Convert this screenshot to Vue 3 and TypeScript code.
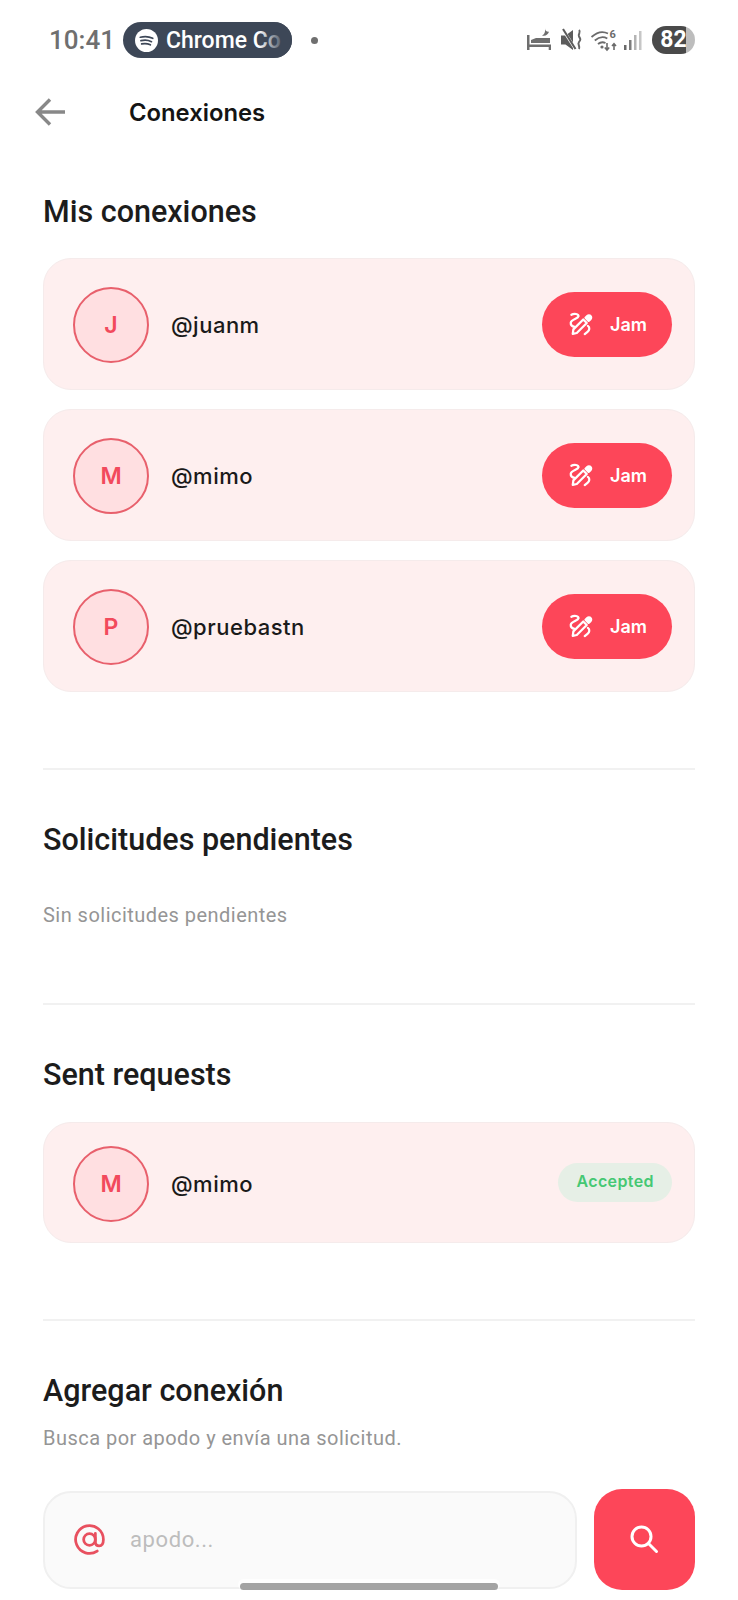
<script setup lang="ts">
interface Connection {
  initial: string
  handle: string
}

const connections: Connection[] = [
  { initial: 'J', handle: '@juanm' },
  { initial: 'M', handle: '@mimo' },
  { initial: 'P', handle: '@pruebastn' },
]
</script>

<template>
  <div class="screen">
    <div class="status-bar">
      <span class="time">10:41</span>
      <div class="media-pill">
        <svg class="spotify" viewBox="0 0 24 24" width="23" height="23">
          <circle cx="12" cy="12" r="12" fill="#fff" />
          <path d="M5.500 8.600c4.400-1.200 9-.9 13 1.100M6.200 12.200c3.700-1 7.600-.7 11 1M7 15.600c3-.7 6.200-.5 9 .9" fill="none" stroke="#3d4757" stroke-width="1.800" stroke-linecap="round" />
        </svg>
        <span class="pill-text">Chrome Co</span>
        <span class="pill-fade"></span>
      </div>
      <span class="dot"></span>
      <div class="status-icons">
        <svg class="bed" width="24" height="26" viewBox="0 0 24 26" fill="#6e6e6e">
          <path d="M0 8h2.500v15H0z" />
          <path d="M4 16v-3l5-2h14v5z" />
          <path d="M2 17.500h22V23h-2.300v-3H2z" />
          <path d="M18 1c.2 2.500 1.200 4 4 3.800-.8 3-4 4.800-7 3.600 2.400-.6 3.600-3.800 3-7.400z" />
        </svg>
        <svg width="26" height="26" viewBox="0 0 26 26" fill="#5c5c5c">
          <path d="M0 8.500h4.500L12 3v20l-7.500-5.500H0z" />
          <path d="M1 1l14 22" stroke="#fff" stroke-width="3" />
          <path d="M2 2l12.500 20" stroke="#5c5c5c" stroke-width="2" />
          <path d="M18 3c2.500 2.500-1.500 4 0 6.500s2 3 0 5.500 1.500 4 0 7" fill="none" stroke="#666" stroke-width="2" />
        </svg>
        <svg width="30" height="30" viewBox="0 0 30 30" fill="none" stroke="#6b6b6b">
          <path d="M1.500 12c5.500-5 11.500-6 16.500-3.500M4.800 15.500c4-3.500 8.500-4.200 12.500-2M8 19c2.500-2 5-2.200 7.500-1" stroke-width="1.800" />
          <circle cx="12" cy="22" r="1.600" fill="#6b6b6b" stroke="none" />
          <path d="M17 18v7M14.800 22.500l2.200 2.500 2.200-2.500M24 25v-6M22 21l2-2.200 2 2.200" stroke-width="1.600" />
          <text x="19.500" y="13" font-size="11" font-family="Roboto, sans-serif" font-weight="700" fill="#6b6b6b" stroke="none">6</text>
        </svg>
        <svg width="20" height="24" viewBox="0 0 20 24">
          <rect x="1" y="17" width="2.500" height="5" fill="#6a6a6a" />
          <rect x="6" y="12" width="2.500" height="10" fill="#7c7c7c" />
          <rect x="11" y="7" width="2.500" height="15" fill="#b4b4b4" />
          <rect x="16" y="3" width="2.500" height="19" fill="#c6c6c6" />
        </svg>
        <div class="battery"><span class="battery-level">82</span></div>
      </div>
    </div>

    <header class="app-bar">
      <svg class="back" width="32" height="30" viewBox="0 0 32 30" fill="none" stroke="#888" stroke-width="3.400">
        <path d="M30 15H3M15 2.500L2.500 15 15 27.500" />
      </svg>
      <h1 class="app-title">Conexiones</h1>
    </header>

    <main class="content">
      <section class="section first">
        <h2 class="section-title">Mis conexiones</h2>
        <div class="card-list">
          <div v-for="c in connections" :key="c.handle" class="card">
            <div class="avatar">{{ c.initial }}</div>
            <span class="handle">{{ c.handle }}</span>
            <button class="jam-btn">
              <svg width="30" height="30" viewBox="0 0 24 24" fill="none" stroke="#fff" stroke-width="1.800" stroke-linecap="round" stroke-linejoin="round">
                <path d="M15.600 7l1.400-1.400c.8-.8 2-.8 2.600 0 .7.7.7 1.800 0 2.500l-1.500 1.400z" fill="#fff" />
                <path d="M13.800 8.400l2.800 2.800-8 8-3.200.7.500-3.600z" />
                <path d="M4.300 4.600C6.500 3.400 10.200 3.800 10 5.800 9.700 7.700 4 8.500 3.800 11c-.1 1.600 1.300 3 3.100 3.300" />
                <path d="M17.500 13.500c1.800 1.200 1.300 3.500-.3 4.800l-2.200 1.800" />
              </svg>
              <span>Jam</span>
            </button>
          </div>
        </div>
      </section>

      <hr class="rule" />

      <section class="section pending">
        <h2 class="section-title">Solicitudes pendientes</h2>
        <p class="muted empty">Sin solicitudes pendientes</p>
      </section>

      <hr class="rule" />

      <section class="section sent">
        <h2 class="section-title">Sent requests</h2>
        <div class="card short">
          <div class="avatar">M</div>
          <span class="handle">@mimo</span>
          <span class="badge">Accepted</span>
        </div>
      </section>

      <hr class="rule" />

      <section class="section add">
        <h2 class="section-title">Agregar conexión</h2>
        <p class="muted hint">Busca por apodo y envía una solicitud.</p>
        <div class="search-row">
          <div class="search-input">
            <svg width="37" height="37" viewBox="0 0 24 24" fill="none" stroke="#e8505f" stroke-width="1.800">
              <circle cx="12" cy="12" r="3.800" />
              <path d="M15.800 8v5.500c0 1.600 1 2.700 2.500 2.700S21 15 21 12a9 9 0 1 0-4 7.500" stroke-linecap="round" />
            </svg>
            <span class="placeholder">apodo...</span>
          </div>
          <button class="search-btn">
            <svg width="36" height="36" viewBox="0 0 36 36" fill="none" stroke="#fff" stroke-width="3" stroke-linecap="round">
              <circle cx="14.500" cy="14.500" r="9.500" />
              <path d="M21.500 21.500l8 8" />
            </svg>
          </button>
        </div>
      </section>
    </main>

    <div class="home-bar"></div>
  </div>
</template>

<style scoped>
.screen {
  position: relative;
  width: 738px;
  height: 1600px;
  overflow: hidden;
  background: #fff;
  font-family: Inter, "Noto Sans", sans-serif;
  color: #1a1a1a;
}

.status-bar {
  display: flex;
  align-items: center;
  height: 36px;
  padding: 22px 43px 0 49px;
  box-sizing: content-box;
}

.time {
  font-family: Roboto, sans-serif;
  font-size: 26px;
  font-weight: 500;
  color: #6f6f6f;
}

.media-pill {
  position: relative;
  display: flex;
  align-items: center;
  gap: 8px;
  width: 169px;
  height: 36px;
  margin-left: 8px;
  padding-left: 12px;
  box-sizing: border-box;
  border-radius: 18px;
  background: #3d4757;
  overflow: hidden;
}

.pill-text {
  font-family: Roboto, sans-serif;
  font-size: 23px;
  font-weight: 500;
  color: #fff;
  white-space: nowrap;
}

.pill-fade {
  position: absolute;
  top: 0;
  right: 0;
  width: 34px;
  height: 100%;
  background: linear-gradient(to right, rgba(61, 71, 87, 0), #3d4757 80%);
}

.dot {
  width: 7px;
  height: 7px;
  margin-left: 19px;
  border-radius: 50%;
  background: #6f6f6f;
}

.status-icons {
  display: flex;
  align-items: center;
  gap: 3px;
  margin-left: auto;
}

.bed {
  margin-right: 7px;
}

.battery {
  width: 43px;
  height: 28px;
  margin-left: 6px;
  border-radius: 14px;
  background: linear-gradient(to right, #4a4a4a 80%, #bdbdbd 80%);
  text-align: center;
}

.battery-level {
  font-family: Roboto, sans-serif;
  font-size: 23px;
  line-height: 28px;
  font-weight: 700;
  color: #fff;
}

.app-bar {
  display: flex;
  align-items: center;
  height: 60px;
  margin-top: 24px;
  padding-left: 35px;
}

.back {
  flex: none;
}

.app-title {
  margin: 0 0 0 62px;
  font-size: 23.800px;
  font-weight: 600;
  color: #141414;
}

.content {
  padding: 0 43px;
}

.section-title {
  margin: 0;
  font-family: Roboto, sans-serif;
  font-size: 30.500px;
  line-height: 40px;
  font-weight: 550;
  color: #1c1c1c;
}

.section.first {
  padding-top: 50px;
}

.card-list {
  display: flex;
  flex-direction: column;
  gap: 19px;
  margin-top: 26px;
}

.card {
  display: flex;
  align-items: center;
  height: 132px;
  padding: 2px 22px 0 29px;
  box-sizing: border-box;
  background: #feefef;
  border: 1.500px solid #f5ebeb;
  border-radius: 28px;
}

.card.short {
  height: 121px;
  margin-top: 27px;
}

.avatar {
  display: flex;
  align-items: center;
  justify-content: center;
  width: 76px;
  height: 76px;
  box-sizing: border-box;
  border-radius: 50%;
  border: 2px solid #e8606c;
  background: #ffdfe1;
  font-size: 23px;
  font-weight: 600;
  color: #f24a5c;
}

.handle {
  flex: 1;
  margin-left: 22px;
  font-size: 22px;
  font-weight: 500;
  letter-spacing: 0.500px;
  color: #1a1a1a;
}

.jam-btn {
  display: flex;
  align-items: center;
  gap: 14px;
  width: 130px;
  height: 65px;
  margin-bottom: 2px;
  padding: 0 0 0 24px;
  box-sizing: border-box;
  border: none;
  border-radius: 33px;
  background: #fd4659;
  color: #fff;
  font-family: Inter, sans-serif;
  font-size: 18px;
  font-weight: 600;
}

.badge {
  height: 39px;
  margin-bottom: 2px;
  padding: 0 18px;
  line-height: 37px;
  border-radius: 20px;
  background: #e6efe6;
  color: #45c873;
  font-size: 16px;
  font-weight: 600;
  letter-spacing: 0.400px;
}

.rule {
  height: 2px;
  margin: 0;
  border: none;
  background: #f1f1f1;
}

.first + .rule {
  margin-top: 76px;
}

.section.pending {
  padding-top: 50px;
  height: 233px;
  box-sizing: border-box;
}

.muted {
  margin: 0;
  font-family: Roboto, sans-serif;
  font-size: 20px;
  letter-spacing: 0.470px;
  color: #959595;
}

.empty {
  margin-top: 43px;
}

.section.sent {
  padding-top: 50px;
  height: 314px;
  box-sizing: border-box;
}

.section.add {
  padding-top: 50px;
}

.hint {
  margin-top: 15px;
}

.search-row {
  display: flex;
  align-items: center;
  gap: 17px;
  margin-top: 39px;
}

.search-input {
  flex: 1;
  display: flex;
  align-items: center;
  gap: 22px;
  height: 98px;
  padding-left: 26px;
  box-sizing: border-box;
  background: #fafafa;
  border: 2px solid #f0f0f0;
  border-radius: 28px;
}

.placeholder {
  font-family: Roboto, sans-serif;
  font-size: 22px;
  letter-spacing: 0.600px;
  color: #bdbdbd;
}

.search-btn {
  display: flex;
  align-items: center;
  justify-content: center;
  width: 101px;
  height: 101px;
  padding: 0;
  border: none;
  border-radius: 28px;
  background: #fd4659;
}

.home-bar {
  position: absolute;
  left: 240px;
  top: 1583px;
  width: 258px;
  height: 7px;
  border-radius: 4px;
  background: #a3a3a3;
  box-shadow: 0 -2px 0 2px rgba(255, 255, 255, 0.7);
}
</style>
